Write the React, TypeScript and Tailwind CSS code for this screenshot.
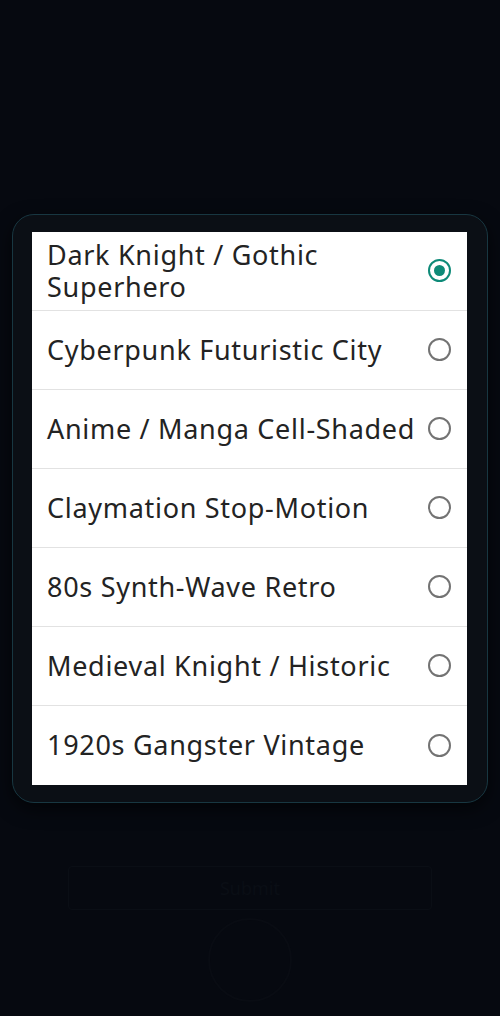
import { useState } from 'react';

const styles = [
  'Dark Knight / Gothic Superhero',
  'Cyberpunk Futuristic City',
  'Anime / Manga Cell-Shaded',
  'Claymation Stop-Motion',
  '80s Synth-Wave Retro',
  'Medieval Knight / Historic',
  '1920s Gangster Vintage',
];

const App = () => {
  const [selected, setSelected] = useState(0);

  return (
    <div
      className="relative min-h-screen bg-[#060910] flex items-center px-3"
      style={{ fontFamily: '"Noto Sans", "Open Sans", sans-serif' }}
    >
      {/* dimmed page behind the dialog */}
      <div className="absolute left-[68px] top-[866px] w-[364px] h-[44px] border border-[#0a0e15] rounded-sm flex items-center justify-center text-[#0a0e15] text-lg">
        Submit
      </div>
      <div className="absolute left-[208px] top-[918px] w-[84px] h-[84px] rounded-full border-2 border-[#090c13]" />

      <div className="relative w-full rounded-[22px] border border-[#183741] bg-[#0b0f15] pl-[19px] pr-5 py-[17px] shadow-[0_6px_18px_rgba(0,0,0,0.6)]">
        <div className="bg-white">
          {styles.map((label, i) => (
            <button
              key={label}
              onClick={() => setSelected(i)}
              className={`w-full min-h-[79px] flex items-center justify-between pl-[15px] pr-4 py-[7px] text-left ${
                i < styles.length - 1 ? 'border-b border-[#e2e2e2]' : ''
              }`}
            >
              <span className="text-[27px] leading-[32px] tracking-[0.7px] text-[#232323] pr-1">{label}</span>
              <span
                className={`shrink-0 w-[23px] h-[23px] rounded-full border-2 flex items-center justify-center ${
                  selected === i ? 'border-[#0e8a78]' : 'border-[#737373]'
                }`}
              >
                {selected === i && <span className="w-[11px] h-[11px] rounded-full bg-[#0e8a78]" />}
              </span>
            </button>
          ))}
        </div>
      </div>
    </div>
  );
};

export default App;
